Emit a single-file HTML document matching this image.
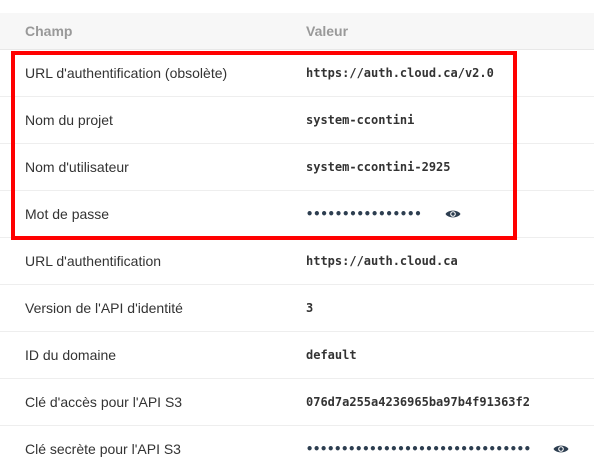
<!DOCTYPE html>
<html><head><style>
body{margin:0;width:594px;height:470px;background:#fff;font-family:"Liberation Sans",sans-serif;position:relative;overflow:hidden}
.hd{position:absolute;left:0;top:13px;width:594px;height:36px;background:#f7f7f7;border-bottom:1px solid #e8e8e8}
.h{position:absolute;top:23px;font-size:14px;font-weight:bold;color:#999}
.row{position:absolute;left:0;width:594px;height:47px;border-bottom:1px solid #eee}
.l{position:absolute;left:25px;top:16px;font-size:14px;color:#333}
.v{position:absolute;left:306px;top:17px;font-family:"DejaVu Sans Mono",monospace;font-weight:bold;font-size:12px;color:#333}
.d{color:#2d3e50;letter-spacing:0}
.eye{position:absolute;top:18px;width:16px;height:12px}
.red{position:absolute;left:11px;top:51px;width:498px;height:181px;border:4px solid #f00}
</style></head><body>
<div class="hd"></div>
<div class="h" style="left:25px">Champ</div>
<div class="h" style="left:306px">Valeur</div>
<div class="row" style="top:49px"><div class="l">URL d'authentification (obsolète)</div><div class="v">https://auth.cloud.ca/v2.0</div></div>
<div class="row" style="top:96px"><div class="l">Nom du projet</div><div class="v">system-ccontini</div></div>
<div class="row" style="top:143px"><div class="l">Nom d'utilisateur</div><div class="v">system-ccontini-2925</div></div>
<div class="row" style="top:190px"><div class="l">Mot de passe</div><div class="v d">••••••••••••••••</div>
<svg class="eye" style="left:445px" viewBox="0 0 16 11"><path d="M0.5 5.5C3 1 13 1 15.5 5.5C13 10 3 10 0.5 5.5Z" fill="#2d3e50"/><circle cx="8" cy="5.5" r="2.8" fill="#fff"/><circle cx="8" cy="5.5" r="1.7" fill="#2d3e50"/></svg></div>
<div class="row" style="top:237px"><div class="l">URL d'authentification</div><div class="v">https://auth.cloud.ca</div></div>
<div class="row" style="top:284px"><div class="l">Version de l'API d'identité</div><div class="v">3</div></div>
<div class="row" style="top:331px"><div class="l">ID du domaine</div><div class="v">default</div></div>
<div class="row" style="top:378px"><div class="l">Clé d'accès pour l'API S3</div><div class="v">076d7a255a4236965ba97b4f91363f2</div></div>
<div class="row" style="top:425px;border:none"><div class="l">Clé secrète pour l'API S3</div><div class="v d" style="letter-spacing:-0.2px">••••••••••••••••••••••••••••••••</div>
<svg class="eye" style="left:553px" viewBox="0 0 16 11"><path d="M0.5 5.5C3 1 13 1 15.5 5.5C13 10 3 10 0.5 5.5Z" fill="#2d3e50"/><circle cx="8" cy="5.5" r="2.8" fill="#fff"/><circle cx="8" cy="5.5" r="1.7" fill="#2d3e50"/></svg></div>
<div class="red"></div>
</body></html>
